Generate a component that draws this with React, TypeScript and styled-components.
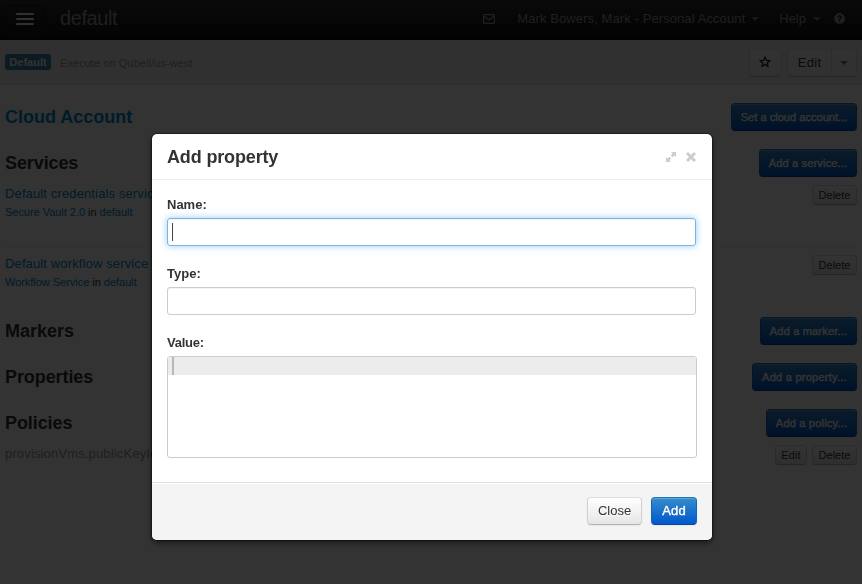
import React from "react";
import styled, { createGlobalStyle, css } from "styled-components";

const GlobalStyle = createGlobalStyle`
  * { box-sizing: border-box; }
  body {
    margin: 0;
    background: #fff;
    color: #333;
    font: 13px/20px "Liberation Sans", Arial, sans-serif;
    overflow: hidden;
  }
`;

const Page = styled.div`
  height: 584px;
  width: 862px;
  display: flex;
  flex-direction: column;
`;

const Label = styled.span<{ $ls?: number }>`
  display: inline-block;
  white-space: nowrap;
  letter-spacing: ${(p) => p.$ls ?? 0}px;
`;

const Navbar = styled.header`
  height: 40px;
  padding: 0 17px 0 5px;
  display: flex;
  align-items: center;
  background: linear-gradient(#2f2f2f, #111);
  color: #999;
`;

const MenuButton = styled.button`
  width: 40px;
  height: 28px;
  margin: 0 15px 2px 0;
  padding: 0;
  display: flex;
  flex-direction: column;
  align-items: center;
  justify-content: center;
  gap: 3px;
  border: 1px solid #1c1c1c;
  border-radius: 4px;
  background: transparent;
`;

const MenuBar = styled.i`
  width: 18px;
  height: 2px;
  border-radius: 1px;
  background: #f5f5f5;
`;

const Brand = styled.div`
  flex: 1;
  font-size: 20px;
  margin-top: -4px;
`;

const NavItem = styled.div<{ $gap: number }>`
  display: flex;
  align-items: center;
  margin: -3px 0 0 ${(p) => p.$gap}px;
`;

const Caret = styled.i<{ $gap?: number }>`
  margin-left: ${(p) => p.$gap ?? 0}px;
  border: 4px solid transparent;
  border-top-color: #777;
  border-bottom: 0;
`;

const SubBar = styled.div`
  height: 45px;
  padding: 1px 5px 0;
  display: flex;
  align-items: center;
  background: #f0f0f0;
  border-bottom: 1px solid #dedede;
`;

const Badge = styled.span`
  width: 46px;
  height: 16px;
  margin: -1px 9px 0 0;
  display: flex;
  align-items: center;
  justify-content: center;
  border-radius: 3px;
  background: #3a87ad;
  color: #fff;
  font-size: 11px;
  font-weight: bold;
  text-shadow: 0 -1px 0 rgba(0, 0, 0, 0.25);
`;

const Crumb = styled.div`
  flex: 1;
  font-size: 11px;
  color: #999;
`;

type ButtonKind = "plain" | "primary";

const Button = styled.button<{ $kind?: ButtonKind; $w: number; $h?: number; $size?: number }>`
  width: ${(p) => p.$w}px;
  height: ${(p) => p.$h ?? 28}px;
  padding: 0;
  flex: none;
  display: flex;
  align-items: center;
  justify-content: center;
  border: 1px solid #ccc;
  border-color: #ddd #d0d0d0 #b3b3b3;
  border-radius: 4px;
  font: ${(p) => p.$size ?? 13}px/18px "Liberation Sans", Arial, sans-serif;
  color: #333;
  background: linear-gradient(#fff, #e6e6e6);
  text-shadow: 0 1px 1px rgba(255, 255, 255, 0.75);
  box-shadow: inset 0 1px 0 rgba(255, 255, 255, 0.2), 0 1px 2px rgba(0, 0, 0, 0.05);
  ${(p) =>
    p.$kind === "primary" &&
    css`
      color: #fff;
      border-color: #1f78b5 #1565b6 #0a4691;
      background: linear-gradient(#348dcc, #0058cc);
      text-shadow: 0 -1px 0 rgba(0, 0, 0, 0.25);
      -webkit-text-stroke: 0.4px #fff;
    `}
`;

const ToolButtons = styled.div`
  display: flex;
  margin-top: 1px;
`;

const StarButton = styled(Button)`
  margin-right: 5px;
  padding: 0 2px 2px 0;
  border-color: #e6e6e6 #dcdcdc #c4c4c4;
  background: linear-gradient(#fafafa, #f0f0f0);
`;

const SplitLeft = styled(StarButton)`
  margin: 0;
  padding: 0;
  border-radius: 4px 0 0 4px;
`;

const SplitRight = styled(StarButton)`
  margin: 0 0 0 -1px;
  padding: 0;
  border-radius: 0 4px 4px 0;
`;

const Content = styled.main`
  flex: 1;
  padding: 18px 5px 0;
`;

const Section = styled.section<{ $gap?: number }>`
  margin-bottom: ${(p) => p.$gap ?? 18}px;
`;

const SectionHead = styled.div`
  height: 28px;
  display: flex;
  align-items: center;
  justify-content: space-between;
`;

const Title = styled.h3<{ $link?: boolean }>`
  margin: 0;
  font-size: 18px;
  line-height: 28px;
  color: ${(p) => (p.$link ? "#08c" : "#333")};
`;

const Item = styled.div<{ $line?: boolean }>`
  height: 70px;
  padding-top: 8px;
  display: flex;
  align-items: flex-start;
  gap: 5px;
  border-bottom: 1px solid ${(p) => (p.$line ? "#eee" : "transparent")};
`;

const ItemText = styled.div`
  flex: 1;
  margin-top: -1px;
`;

const ItemName = styled.div<{ $muted?: boolean }>`
  line-height: 20px;
  color: ${(p) => (p.$muted ? "#999" : "#08c")};
`;

const ItemMeta = styled.div`
  font-size: 11px;
  line-height: 16px;
`;

const Link = styled.a`
  color: #08c;
`;

const Overlay = styled.div`
  position: fixed;
  inset: 0;
  display: flex;
  align-items: flex-start;
  justify-content: center;
  padding: 134px 0 0 2px;
  background: rgba(0, 0, 0, 0.8);
`;

const Dialog = styled.div`
  width: 560px;
  height: 406px;
  display: flex;
  flex-direction: column;
  border-radius: 5px;
  background: #fff;
  box-shadow: 0 3px 7px rgba(0, 0, 0, 0.55), 0 0 1px 1px rgba(0, 0, 0, 0.45);
`;

const DialogHead = styled.div`
  height: 46px;
  padding: 0 16px 0 15px;
  display: flex;
  align-items: center;
  border-bottom: 1px solid #eee;
`;

const DialogTitle = styled.h3`
  flex: 1;
  margin: 0;
  font-size: 18px;
`;

const DialogBody = styled.div`
  flex: 1;
  padding: 15px 15px 0;
`;

const Field = styled.label`
  display: block;
  height: 69px;
`;

const FieldName = styled.div`
  height: 23px;
  font-weight: bold;
`;

const Input = styled.div<{ $focus?: boolean }>`
  width: 529px;
  height: 28px;
  padding: 4px 4px;
  border: 1px solid #ccc;
  border-radius: 3px;
  box-shadow: inset 0 1px 1px rgba(0, 0, 0, 0.05);
  ${(p) =>
    p.$focus &&
    css`
      border-color: #78b4e6;
      box-shadow: inset 0 1px 1px rgba(0, 0, 0, 0.05), 0 0 7px rgba(82, 168, 236, 0.6);
    `}
`;

const Cursor = styled.i`
  display: block;
  width: 1px;
  height: 18px;
  background: #444;
`;

const Editor = styled.div`
  width: 530px;
  height: 102px;
  border: 1px solid #ccc;
  border-radius: 3px;
`;

const ActiveLine = styled.div`
  height: 18px;
  padding-left: 4px;
  background: #ececec;
`;

const EditorCursor = styled(Cursor)`
  width: 2px;
  background: #b7b7b7;
`;

const DialogFoot = styled.div`
  height: 58px;
  padding: 14px 15px 0;
  display: flex;
  justify-content: flex-end;
  gap: 9px;
  border-top: 1px solid #ddd;
  border-radius: 0 0 5px 5px;
  background: #f4f4f4;
  box-shadow: inset 0 1px 0 #fff;
`;

const Mail = () => (
  <svg width="12" height="10" viewBox="0 0 12 10" fill="none" stroke="#999" strokeWidth="1.3">
    <rect x="0.65" y="0.65" width="10.7" height="8.7" rx="0.6" />
    <path d="M1 2 6 6 11 2" />
  </svg>
);

const HelpIcon = () => (
  <svg width="11" height="11" viewBox="0 0 11 11">
    <circle cx="5.5" cy="5.5" r="5.4" fill="#999" />
    <path d="M3.8 4.2C3.9 2.4 7.3 2.5 7.1 4.2 7 5.2 5.6 5.2 5.6 6.5M5.6 7.3v1.4" fill="none" stroke="#1a1a1a" strokeWidth="1.4" />
  </svg>
);

const Star = () => (
  <svg width="12" height="12" viewBox="0 0 12 12" fill="none" stroke="#222" strokeWidth="1.3" strokeLinejoin="miter">
    <path d="m6 1.3 1.4 3 3.3.4-2.4 2.2.6 3.3L6 8.6l-2.9 1.6.6-3.3L1.3 4.7l3.3-.4z" />
  </svg>
);

const HeadIcons = styled.div`
  display: flex;
  align-items: center;
  gap: 10px;
`;

const Expand = () => (
  <svg width="10" height="10" viewBox="0 0 10 10" fill="#ccc">
    <path d="M5 0h5v5L8.4 3.4 6.6 5.2 4.8 3.4 6.6 1.6z" />
    <path d="M5 10H0V5l1.6 1.6L3.4 4.8l1.8 1.8-1.8 1.8z" />
  </svg>
);

const Cross = () => (
  <svg width="10" height="10" viewBox="0 0 10 10" stroke="#ccc" strokeWidth="2.9">
    <path d="m1 1 8 8M9 1 1 9" />
  </svg>
);

export default function App() {
  return (
    <>
      <GlobalStyle />
      <Page>
        <Navbar>
          <MenuButton aria-label="Menu"><MenuBar /><MenuBar /><MenuBar /></MenuButton>
          <Brand><Label $ls={-0.42}>default</Label></Brand>
          <NavItem $gap={0}><Mail /></NavItem>
          <NavItem $gap={22}><Label $ls={0.09}>Mark Bowers, Mark - Personal Account</Label><Caret $gap={6} /></NavItem>
          <NavItem $gap={20}><Label>Help</Label><Caret $gap={7} /></NavItem>
          <NavItem $gap={13}><HelpIcon /></NavItem>
        </Navbar>
        <SubBar>
          <Badge><Label>Default</Label></Badge>
          <Crumb><Label $ls={0.06}>Execute on Qubell/us-west</Label></Crumb>
          <ToolButtons>
            <StarButton $w={33} aria-label="Favorite"><Star /></StarButton>
            <SplitLeft $w={45}><Label $ls={0.3}>Edit</Label></SplitLeft>
            <SplitRight $w={26} aria-label="More"><Caret /></SplitRight>
          </ToolButtons>
        </SubBar>
        <Content>
          <Section>
            <SectionHead>
              <Title $link><Label>Cloud Account</Label></Title>
              <Button $kind="primary" $w={126} $size={11}><Label $ls={0.04}>Set a cloud account...</Label></Button>
            </SectionHead>
          </Section>
          <Section $gap={0}>
            <SectionHead>
              <Title><Label $ls={-0.1}>Services</Label></Title>
              <Button $kind="primary" $w={98} $size={11}><Label $ls={0.18}>Add a service...</Label></Button>
            </SectionHead>
            <Item $line>
              <ItemText>
                <ItemName><Label $ls={0.13}>Default credentials service</Label></ItemName>
                <ItemMeta><Label $ls={-0.03}><Link>Secure Vault 2.0</Link> in <Link>default</Link></Label></ItemMeta>
              </ItemText>
              <Button $w={45} $h={20} $size={11}><Label>Delete</Label></Button>
            </Item>
            <Item>
              <ItemText>
                <ItemName><Label $ls={0.13}>Default workflow service</Label></ItemName>
                <ItemMeta><Label $ls={-0.03}><Link>Workflow Service</Link> in <Link>default</Link></Label></ItemMeta>
              </ItemText>
              <Button $w={45} $h={20} $size={11}><Label>Delete</Label></Button>
            </Item>
          </Section>
          <Section>
            <SectionHead>
              <Title><Label>Markers</Label></Title>
              <Button $kind="primary" $w={97} $size={11}><Label $ls={0.18}>Add a marker...</Label></Button>
            </SectionHead>
          </Section>
          <Section>
            <SectionHead>
              <Title><Label $ls={-0.08}>Properties</Label></Title>
              <Button $kind="primary" $w={105} $size={11}><Label $ls={0.25}>Add a property...</Label></Button>
            </SectionHead>
          </Section>
          <Section>
            <SectionHead>
              <Title><Label $ls={-0.08}>Policies</Label></Title>
              <Button $kind="primary" $w={91} $size={11}><Label $ls={0.2}>Add a policy...</Label></Button>
            </SectionHead>
            <Item>
              <ItemText><ItemName $muted><Label $ls={0.15}>provisionVms.publicKeyId</Label></ItemName></ItemText>
              <Button $w={32} $h={20} $size={11}><Label $ls={0.1}>Edit</Label></Button>
              <Button $w={45} $h={20} $size={11}><Label>Delete</Label></Button>
            </Item>
          </Section>
        </Content>
      </Page>
      <Overlay>
        <Dialog role="dialog">
          <DialogHead>
            <DialogTitle><Label $ls={-0.15}>Add property</Label></DialogTitle>
            <HeadIcons><Expand /><Cross /></HeadIcons>
          </DialogHead>
          <DialogBody>
            <Field><FieldName><Label>Name:</Label></FieldName><Input $focus><Cursor /></Input></Field>
            <Field><FieldName><Label>Type:</Label></FieldName><Input /></Field>
            <Field><FieldName><Label $ls={-0.25}>Value:</Label></FieldName><Editor><ActiveLine><EditorCursor /></ActiveLine></Editor></Field>
          </DialogBody>
          <DialogFoot>
            <Button $w={55}><Label>Close</Label></Button>
            <Button $kind="primary" $w={46}><Label $ls={0.2}>Add</Label></Button>
          </DialogFoot>
        </Dialog>
      </Overlay>
    </>
  );
}
